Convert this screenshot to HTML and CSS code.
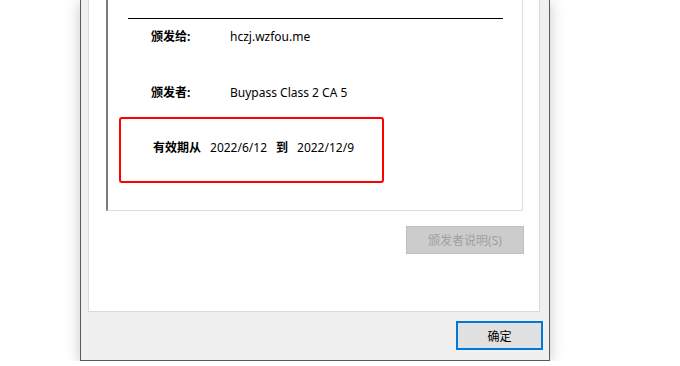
FILE: index.html
```html
<!DOCTYPE html>
<html lang="zh-CN">
  <head>
    <meta name="viewport" content="width=device-width, initial-scale=1">
    <link rel="stylesheet" href="styles.css">
    <title>证书</title>
  </head>
  <body>
    <div class="dialog">
      <div class="panel">
        <div class="certBox">
          <div class="rule"></div>

          <div class="row firstRow">
            <span class="label">颁发给:</span>
            <span class="value">hczj.wzfou.me</span>
          </div>

          <div class="row secondRow">
            <span class="label">颁发者:</span>
            <span class="value">Buypass Class 2 CA 5</span>
          </div>

          <div class="validBox">
            <b>有效期从</b>
            <span class="date">2022/6/12</span>
            <b>到</b>
            <span class="date">2022/12/9</span>
          </div>
        </div>

        <div class="buttonRow">
          <button class="issuerButton" disabled>颁发者说明(S)</button>
        </div>
      </div>

      <div class="footer">
        <button class="okButton">确定</button>
      </div>
    </div>
  </body>
</html>
```

FILE: styles.css
```css
body {
  margin: 0;
  background-color: white;
  font-family: "Noto Sans", "Noto Sans CJK SC", sans-serif;
  font-size: 12px;
  color: black;
  overflow: hidden;
}

.dialog {
  margin-left: 80px;
  width: 468px;
  height: 360px;
  background-color: #f0f0f0;
  border: 1px solid #5a5a5a;
  border-top: none;
  box-shadow: 0 2px 14px rgba(0, 0, 0, 0.22);
}

.panel {
  margin-left: 7px;
  width: 450px;
  height: 311px;
  background-color: white;
  border: 1px solid #dadada;
  border-top: none;
}

.certBox {
  margin-left: 17px;
  width: 414px;
  height: 210px;
  border-left: 2px solid #7c7c7c;
  border-right: 1px solid #dedede;
  border-bottom: 1px solid #dedede;
  overflow: hidden;
}

.rule {
  margin: 18px 0 0 20px;
  width: 375px;
  height: 1px;
  background-color: black;
}

.row {
  display: flex;
  padding-left: 43px;
  line-height: 16px;
}
.firstRow {
  margin-top: 10px;
}
.secondRow {
  margin-top: 40px;
}

.label {
  width: 79px;
  font-weight: bold;
}

.validBox {
  box-sizing: border-box;
  margin: 16px 0 0 11px;
  width: 265px;
  height: 66px;
  padding: 21px 0 0 32px;
  border: 2px solid #ff0000;
  border-radius: 3px;
  line-height: 16px;
  display: flex;
  gap: 9px;
  align-items: flex-start;
}
.validBox b {
  font-weight: bold;
}

.buttonRow {
  display: flex;
  justify-content: flex-end;
  padding-right: 15px;
  margin-top: 15px;
}

button {
  box-sizing: border-box;
  font-family: inherit;
  font-size: 12px;
  padding: 0;
}

.issuerButton {
  width: 118px;
  height: 28px;
  background-color: #cccccc;
  border: 1px solid #bfbfbf;
  color: #a0a0a0;
}

.footer {
  display: flex;
  justify-content: flex-end;
  padding-right: 6px;
  margin-top: 9px;
}

.okButton {
  width: 87px;
  height: 29px;
  background-color: #e1e1e1;
  border: 2px solid #0078d7;
  color: black;
}
```
